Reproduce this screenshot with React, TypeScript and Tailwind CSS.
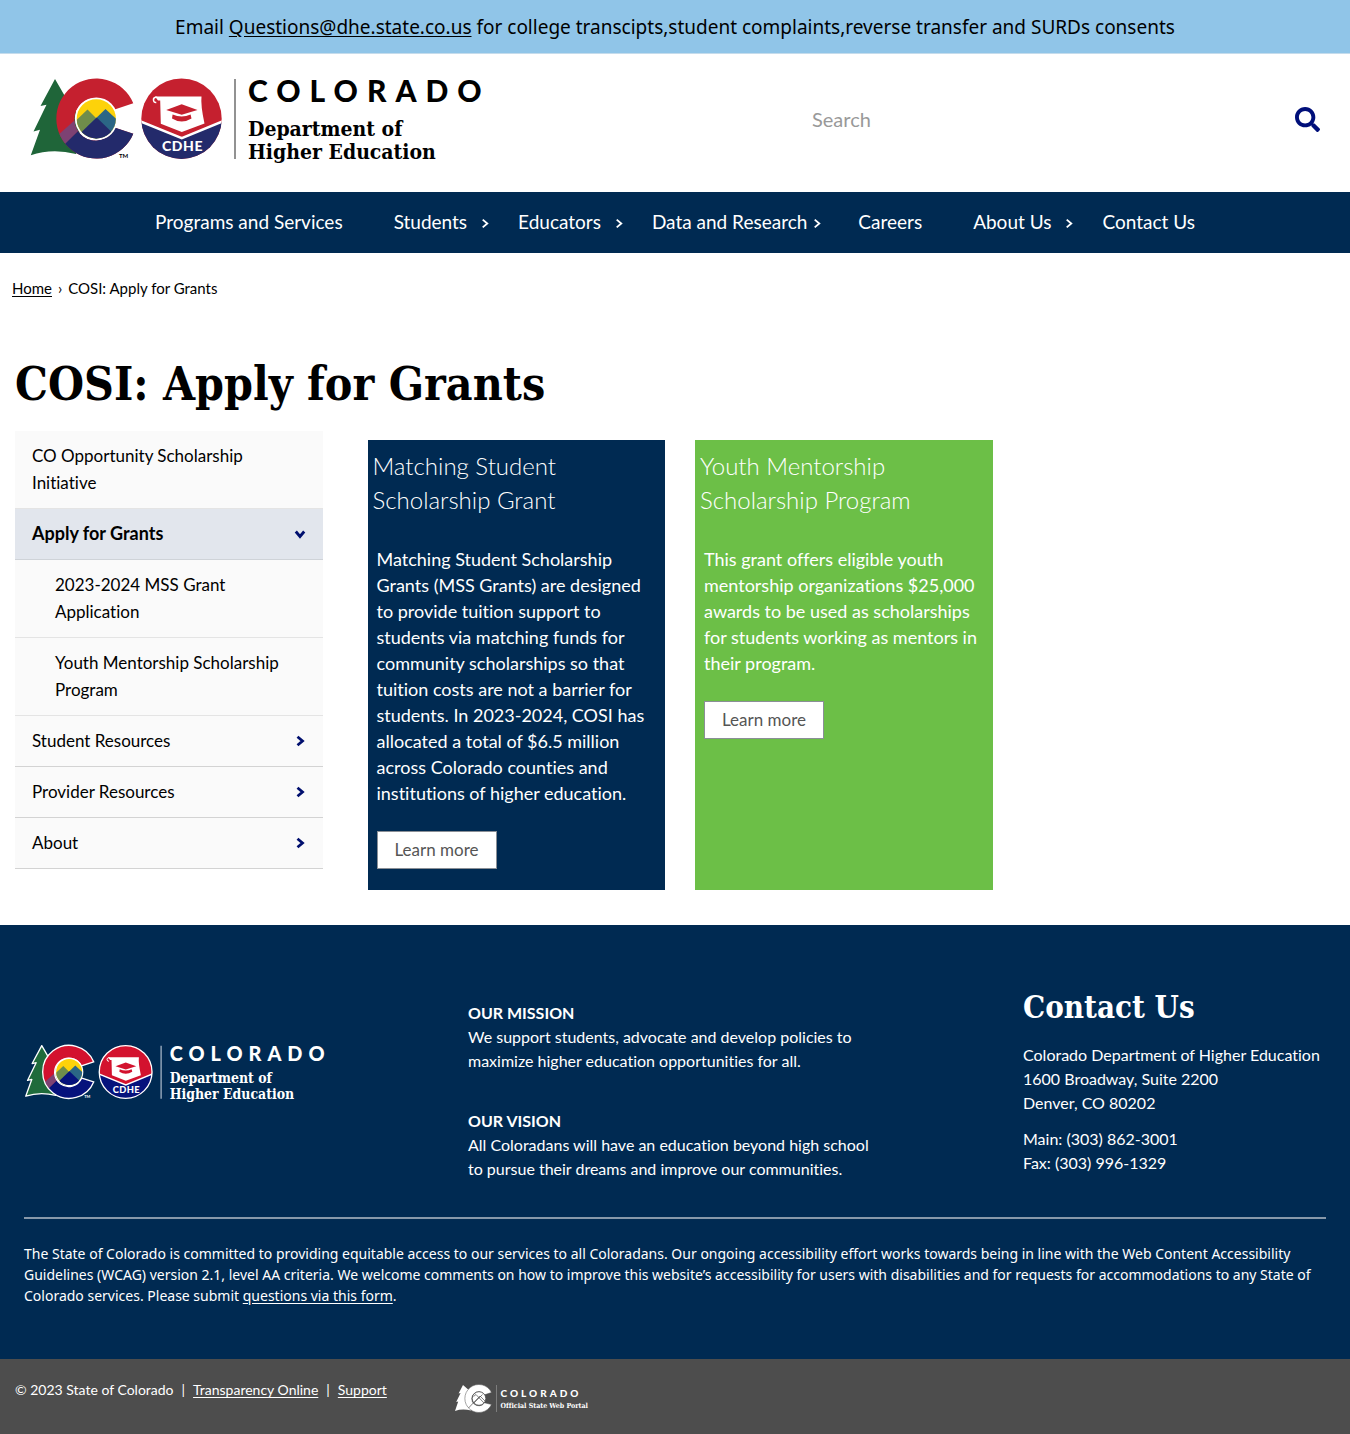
import React from "react";
import { FaSearch } from "react-icons/fa";

const SLAB = "'DejaVu Serif Condensed', 'DejaVu Serif', serif";
const SANS = "Lato, 'Noto Sans', sans-serif";

function Chevron({ className = "", stroke = 2 }: { className?: string; stroke?: number }) {
  return (
    <svg viewBox="0 0 10 12" fill="none" stroke="currentColor" strokeWidth={stroke} className={className} aria-hidden="true">
      <path d="M2.5 1.8 7.5 6l-5 4.2" />
    </svg>
  );
}

function DepartmentLogo({ id, inverse = false, className = "" }: { id: string; inverse?: boolean; className?: string }) {
  const ink = inverse ? "#ffffff" : "#000000";
  const navy = inverse ? "#06127c" : "#232a6b";
  const red = inverse ? "#d3122e" : "#c5202f";
  const green = inverse ? "#1f6b3b" : "#1f6539";
  const outline = inverse ? "#ffffff" : "none";
  const clip = `${id}-disc`;
  const cShape = `${id}-c`;
  const cPath = "M103.3 25.3A40 40 0 1 0 103.3 55.8L85.2 49.8A21.3 21.3 0 1 1 84.6 31.5Z";
  return (
    <svg viewBox="0 0 455 86" role="img" aria-label="Colorado Department of Higher Education" className={className}>
      <defs>
        <clipPath id={clip}>
          <circle cx="66.3" cy="40.8" r="19.6" />
        </clipPath>
        <clipPath id={cShape}>
          <path d={cPath} />
        </clipPath>
        <clipPath id={`${id}-seal`}>
          <circle cx="151.5" cy="40.7" r="40.2" />
        </clipPath>
      </defs>
      <path
        d="M25 1 10.5 28l6-1.3L3.5 53.5l6.5-1.7L.8 77.3Q22 70 46 76l6-36L40 27Z"
        fill={green}
        stroke={outline}
        strokeWidth="2"
        strokeLinejoin="round"
      />
      <g clipPath={`url(#${cShape})`}>
        <rect x="24" y="0" width="82" height="82" fill={red} />
        <path d="M32 68 50 51 70 58 106 38v46H24Z" fill={navy} />
        <path d="M27 58 45 42 50 51 33 68Z" fill="#7d4273" />
      </g>
      <path d={cPath} fill="none" stroke={outline} strokeWidth="2" />
      <circle cx="66.3" cy="40.8" r="21.4" fill="#ffffff" />
      <g clipPath={`url(#${clip})`}>
        <rect x="46" y="20" width="42" height="42" fill="#fdd20a" />
        <path d="M38 50 57.5 31.5 76 50 66 62H38Z" fill="#6f8d4b" />
        <path d="M57 49 75.5 31 94 48v14H66Z" fill="#2b6685" />
        <path d="M40 65 66.7 39.5 93 65Z" fill={navy} />
      </g>
      <text x="89" y="80" fontFamily={SANS} fontWeight="700" fontSize="6" fill={ink}>TM</text>

      <g clipPath={`url(#${id}-seal)`}>
        <rect x="111" y="0" width="82" height="82" fill={red} />
        <path d="M110 43.5 151.8 60.5 193 43.5V84H110Z" fill={navy} />
        <path d="M110 43.2 151.8 60.2 193 43.2" fill="none" stroke="#ffffff" strokeWidth="2.4" />
      </g>
      <circle cx="151.5" cy="40.7" r="39.8" fill="none" stroke={outline} strokeWidth="2" />
      <path d="M125 18.4H171.5Q170.5 27 174.5 45.5L151.8 54 130.8 45.7 130.2 22.5H128Z" fill="#ffffff" />
      <path d="M128.6 21.3a2.6 2.6 0 1 0-2.3 3.2" fill="none" stroke="#ffffff" strokeWidth="1.5" />
      <path d="M136.2 32 151.7 26.3 167.5 32 151.7 36.8Z" fill={red} />
      <path d="M142.6 36.5Q151.7 40.5 160.6 36.5L161.5 40.5Q151.7 46.5 142 40.5Z" fill={red} />
      <text x="132" y="72.6" fontFamily={SANS} fontWeight="900" fontSize="14" letterSpacing="0.6" fill="#ffffff">CDHE</text>

      <path d="M205 1v80" stroke={inverse ? "#c8d2de" : "#777777"} strokeWidth="1.6" />
      <text x="218" y="23.6" fontFamily={SANS} fontWeight="900" fontSize="30" letterSpacing="9" fill={ink}>COLORADO</text>
      <text x="218" y="57.5" fontFamily={SLAB} fontWeight="700" fontSize="21" fill={ink}>Department of</text>
      <text x="218" y="81" fontFamily={SLAB} fontWeight="700" fontSize="21" fill={ink}>Higher Education</text>
    </svg>
  );
}

function PortalLogo({ className = "" }: { className?: string }) {
  return (
    <svg viewBox="0 0 136 30" role="img" aria-label="Colorado Official State Web Portal" className={className}>
      <path d="M8 1 3.6 9.5l2-.4L1.2 18l2-.5L0 27q7-2.5 16-.5V8Z" fill="#fff" />
      <path d="M36.5 8.5A14 14 0 1 0 36.5 20.5L29.5 18.8A7 7 0 1 1 29.5 10.8Z" fill="#fff" stroke="#4d4d4d" strokeWidth=".5" />
      <circle cx="24" cy="14.5" r="6.8" fill="#fff" stroke="#4d4d4d" strokeWidth=".8" />
      <path d="m13.5 24 8.500-9 3-3 5.5 5.5M18.5 12.5l2.500-2 8 8.5M19 19l8.500-8.500" fill="none" stroke="#4d4d4d" strokeWidth=".7" />
      <path d="M41.5 1v27" stroke="#8a8a8a" strokeWidth=".8" />
      <text x="45.5" y="12.5" fontFamily={SANS} fontWeight="900" fontSize="10" letterSpacing="3" fill="#fff">COLORADO</text>
      <text x="45.5" y="24" fontFamily={SLAB} fontWeight="700" fontSize="7" fill="#fff">Official State Web Portal</text>
    </svg>
  );
}

const navItems: { label: string; menu?: boolean; tight?: boolean }[] = [
  { label: "Programs and Services" },
  { label: "Students", menu: true },
  { label: "Educators", menu: true },
  { label: "Data and Research", menu: true, tight: true },
  { label: "Careers" },
  { label: "About Us", menu: true },
  { label: "Contact Us" },
];

const sideItems: { label: string; kind?: "active" | "sub" | "parent" }[] = [
  { label: "CO Opportunity Scholarship Initiative" },
  { label: "Apply for Grants", kind: "active" },
  { label: "2023-2024 MSS Grant Application", kind: "sub" },
  { label: "Youth Mentorship Scholarship Program", kind: "sub" },
  { label: "Student Resources", kind: "parent" },
  { label: "Provider Resources", kind: "parent" },
  { label: "About", kind: "parent" },
];

function SideItem({ label, kind }: { label: string; kind?: "active" | "sub" | "parent" }) {
  const look =
    kind === "active"
      ? "bg-[#e2e6ed] text-[18px] leading-[27px] font-bold border-[#cfd3d8]"
      : kind === "parent"
        ? "bg-[#fafafa] border-[#d3d3d3]"
        : "bg-[#fafafa] border-[#e4e4e4]";
  return (
    <li className={`border-b ${look}`}>
      <a href="#" className={`flex items-center justify-between pt-[11px] pr-[18px] pb-3 ${kind === "sub" ? "pl-10" : "pl-[17px]"}`}>
        <span className={kind ? "" : "max-w-[240px]"}>{label}</span>
        {kind === "parent" && <Chevron stroke={2.8} className="h-3 w-[10px] text-[#000f6e]" />}
        {kind === "active" && <Chevron stroke={2.8} className="h-3 w-[10px] rotate-90 text-[#000f6e]" />}
      </a>
    </li>
  );
}

function GrantCard({ title, text, tone }: { title: string; text: string; tone: string }) {
  return (
    <article className={`pt-[9px] pb-[21px] text-white ${tone}`}>
      <h2 className="pr-8 pl-[5px] text-2xl leading-[34px] font-light">{title}</h2>
      <div className="mt-[29px] px-[9px]">
        <p className="text-lg leading-[26px]">{text}</p>
        <a href="#" className="mt-[25px] inline-block border border-[#8a8f96] bg-white px-[17px] text-[17px] leading-9 text-[#555]">
          Learn more
        </a>
      </div>
    </article>
  );
}

export default function App() {
  return (
    <div className="bg-white font-[Lato,'Noto_Sans',sans-serif] text-black [font-variant-ligatures:none]">
      <div className="border-b border-[#c5dcec] bg-[#90c5e8] pt-px text-center font-['Noto_Sans',sans-serif] text-[19px] leading-[52px]">
        Email <a href="#" className="underline underline-offset-2">Questions@dhe.state.co.us</a> for college transcipts,student complaints,reverse transfer and SURDs consents
      </div>

      <header className="flex items-start justify-between px-[30px] pt-6 pb-7">
        <a href="#"><DepartmentLogo id="top" className="block h-[86px] w-[455px] overflow-visible" /></a>
        <form className="flex w-[508px] items-center pt-[21px]" onSubmit={(e) => e.preventDefault()}>
          <input type="search" aria-label="Search" placeholder="Search" className="h-10 min-w-0 grow text-xl placeholder-[#999] outline-none" />
          <button type="submit" aria-label="Submit search" className="text-[25px] text-[#000f7a]"><FaSearch /></button>
        </form>
      </header>

      <nav aria-label="Main" className="bg-[#002a52] pb-[2px] text-[19px] leading-[59px] text-white">
        <ul className="flex justify-center">
          {navItems.map((item, i) => (
            <li key={item.label} className="flex items-center">
              <a href="#">{item.label}</a>
              {i < navItems.length - 1 && (
                <span className={`flex w-[51px] pt-1 ${item.tight ? "pl-[5px]" : "pl-[13px]"}`}>
                  {item.menu && <Chevron stroke={2} className="h-[11px] w-[10px]" />}
                </span>
              )}
            </li>
          ))}
        </ul>
      </nav>

      <main className="pb-[35px]">
        <nav aria-label="Breadcrumb" className="flex items-center gap-[6px] px-3 pt-[23px] text-[15px] leading-6">
          <a href="#" className="underline underline-offset-2">Home</a>
          <span>›</span>
          <span>COSI: Apply for Grants</span>
        </nav>
        <h1 className="mt-[52px] mb-[15px] px-[15px] font-['DejaVu_Serif_Condensed','DejaVu_Serif',serif] text-[46px] leading-[64px] font-bold">
          COSI: Apply for Grants
        </h1>
        <div className="flex items-start">
          <aside className="w-1/4 px-[15px]">
            <ul className="text-[17px] leading-[27px]">
              {sideItems.map((item) => <SideItem key={item.label} {...item} />)}
            </ul>
          </aside>
          <section className="mt-[9px] grid w-3/4 grid-cols-3 gap-[30px] px-[30px]">
            <GrantCard
              tone="bg-[#002a52]"
              title="Matching Student Scholarship Grant"
              text="Matching Student Scholarship Grants (MSS Grants) are designed to provide tuition support to students via matching funds for community scholarships so that tuition costs are not a barrier for students. In 2023-2024, COSI has allocated a total of $6.5 million across Colorado counties and institutions of higher education."
            />
            <GrantCard
              tone="bg-[#6cbf47]"
              title="Youth Mentorship Scholarship Program"
              text="This grant offers eligible youth mentorship organizations $25,000 awards to be used as scholarships for students working as mentors in their program."
            />
          </section>
        </div>
      </main>

      <footer className="text-white">
        <div className="bg-[#002a52] px-6 pt-[60px] pb-[53px]">
          <div className="grid grid-cols-[444fr_555fr_303fr] text-base leading-6">
            <div className="pt-[60px]">
              <DepartmentLogo id="bottom" inverse className="block h-[57px] w-[304px] overflow-visible" />
            </div>
            <div className="pt-4">
              <section className="max-w-[412px]">
                <h3 className="font-bold">OUR MISSION</h3>
                <p>We support students, advocate and develop policies to maximize higher education opportunities for all.</p>
              </section>
              <section className="mt-9 max-w-[412px]">
                <h3 className="font-bold">OUR VISION</h3>
                <p>All Coloradans will have an education beyond high school to pursue their dreams and improve our communities.</p>
              </section>
            </div>
            <address className="not-italic">
              <h2 className="font-['DejaVu_Serif_Condensed','DejaVu_Serif',serif] text-[31px] leading-[44px] font-bold">Contact Us</h2>
              <p className="mt-[14px]">Colorado Department of Higher Education<br />1600 Broadway, Suite 2200<br />Denver, CO 80202</p>
              <p className="mt-3">Main: (303) 862-3001<br />Fax: (303) 996-1329</p>
            </address>
          </div>
          <p className="mt-9 border-t-2 border-[#8798aa] pt-6 font-['Noto_Sans',sans-serif] text-sm leading-[21px]">
            The State of Colorado is committed to providing equitable access to our services to all Coloradans. Our ongoing accessibility effort works towards being in line with the Web Content Accessibility Guidelines (WCAG) version 2.1, level AA criteria. We welcome comments on how to improve this website’s accessibility for users with disabilities and for requests for accommodations to any State of Colorado services. Please submit <a href="#" className="underline underline-offset-2">questions via this form</a>.
          </p>
        </div>
        <div className="flex items-start bg-[#4d4d4d] px-[15px] pb-5 text-sm leading-6">
          <p className="flex w-1/3 gap-2 pt-[19px]">
            <span>© 2023 State of Colorado</span>
            <span>|</span>
            <a href="#" className="underline underline-offset-2">Transparency Online</a>
            <span>|</span>
            <a href="#" className="underline underline-offset-2">Support</a>
          </p>
          <a href="#" className="pt-[25px]"><PortalLogo className="block h-[30px] w-[136px] overflow-visible" /></a>
        </div>
      </footer>
    </div>
  );
}
